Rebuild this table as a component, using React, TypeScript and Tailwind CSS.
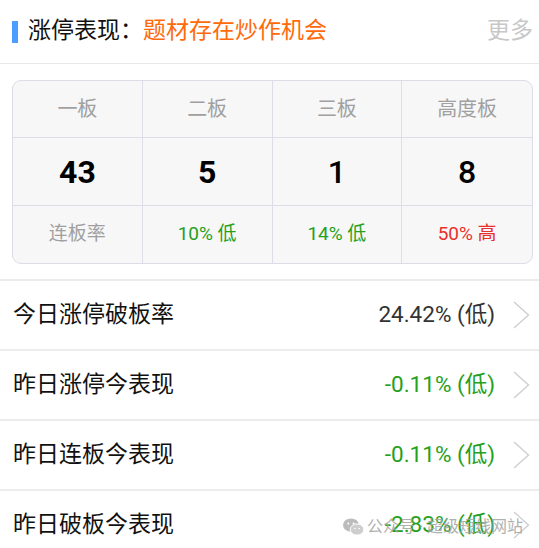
const FONT = "font-['Roboto','Noto_Sans_CJK_SC',sans-serif]";

const heads = ["一板", "二板", "三板", "高度板"];
const nums = [
  { v: "43", w: "font-bold" },
  { v: "5", w: "font-bold" },
  { v: "1", w: "font-medium" },
  { v: "8", w: "font-medium" },
];
const rates = [
  { t: "连板率", c: "text-[#a0a0a0]" },
  { t: "10% 低", c: "text-[#25a01c]" },
  { t: "14% 低", c: "text-[#25a01c]" },
  { t: "50% 高", c: "text-[#e8302c]" },
];

const rows = [
  { label: "今日涨停破板率", value: "24.42% (低)", color: "text-[#333333]" },
  { label: "昨日涨停今表现", value: "-0.11% (低)", color: "text-[#25a01c]" },
  { label: "昨日连板今表现", value: "-0.11% (低)", color: "text-[#25a01c]" },
  { label: "昨日破板今表现", value: "-2.83% (低)", color: "text-[#25a01c]" },
];

function Chevron() {
  return (
    <svg width="17" height="28" viewBox="0 0 17 28" fill="none">
      <polyline points="1,1 15.5,14 1,27" stroke="#cfcfcf" strokeWidth="1.4" />
    </svg>
  );
}

function WeChat() {
  return (
    <svg width="21" height="18" viewBox="0 0 21 18">
      <ellipse cx="8" cy="7" rx="8" ry="6.6" fill="#b5b5b5" />
      <ellipse cx="14" cy="11.5" rx="6.8" ry="5.6" fill="#c9c9c9" stroke="#fff" strokeWidth="1" />
      <circle cx="5.3" cy="5.5" r="1" fill="#fff" />
      <circle cx="10.5" cy="5.5" r="1" fill="#fff" />
      <circle cx="12" cy="10.5" r="0.8" fill="#fff" />
      <circle cx="16.2" cy="10.5" r="0.8" fill="#fff" />
    </svg>
  );
}

export default function App() {
  return (
    <div className={`${FONT} relative w-[539px] h-[548px] overflow-hidden bg-white`}>
      <div className="flex h-[64px] items-center border-b border-[#e8e8e8] pl-[12px] pr-[6px]">
        <span className="mr-[10px] h-[22px] w-[6px] bg-[#4d9cff]" />
        <span className="text-[23px] text-[#111]">涨停表现：</span>
        <span className="text-[23px] text-[#ff6a0a]">题材存在炒作机会</span>
        <span className="ml-auto text-[23px] text-[#c8c8c8]">更多</span>
      </div>

      <div className="pl-[12px] pr-[6px] pt-[16px]">
        <div className="grid grid-cols-4 overflow-hidden rounded-[9px] border border-[#dcdde8] bg-[#f7f7f7]">
          {heads.map((h, i) => (
            <div
              key={h}
              className={`flex h-[57px] items-center justify-center border-b border-[#dcdde8] text-[20px] text-[#a0a0a0] ${i < 3 ? "border-r" : ""}`}
            >
              {h}
            </div>
          ))}
          {nums.map((n, i) => (
            <div
              key={i}
              className={`flex h-[68px] items-center justify-center border-b border-[#dcdde8] text-[32px] text-black ${n.w} ${i < 3 ? "border-r" : ""}`}
            >
              {n.v}
            </div>
          ))}
          {rates.map((r, i) => (
            <div
              key={i}
              className={`flex h-[57px] items-center justify-center border-[#dcdde8] text-[19px] ${r.c} ${i < 3 ? "border-r" : ""}`}
            >
              {r.t}
            </div>
          ))}
        </div>
      </div>

      <div className="mt-[15px]">
        {rows.map((r) => (
          <div
            key={r.label}
            className="flex h-[70px] items-center border-t-2 border-[#ececec] pl-[13px] pr-[9px]"
          >
            <span className="text-[23px] text-[#111]">{r.label}</span>
            <span className={`ml-auto mr-[18px] text-[22.5px] ${r.color}`}>{r.value}</span>
            <Chevron />
          </div>
        ))}
      </div>

      <div className="absolute left-[343px] top-[515px] flex items-center gap-[3px] opacity-90">
        <WeChat />
        <span className="text-[16px] text-[#a8a8a8]">公众号 · 超级短线网站</span>
      </div>
    </div>
  );
}
